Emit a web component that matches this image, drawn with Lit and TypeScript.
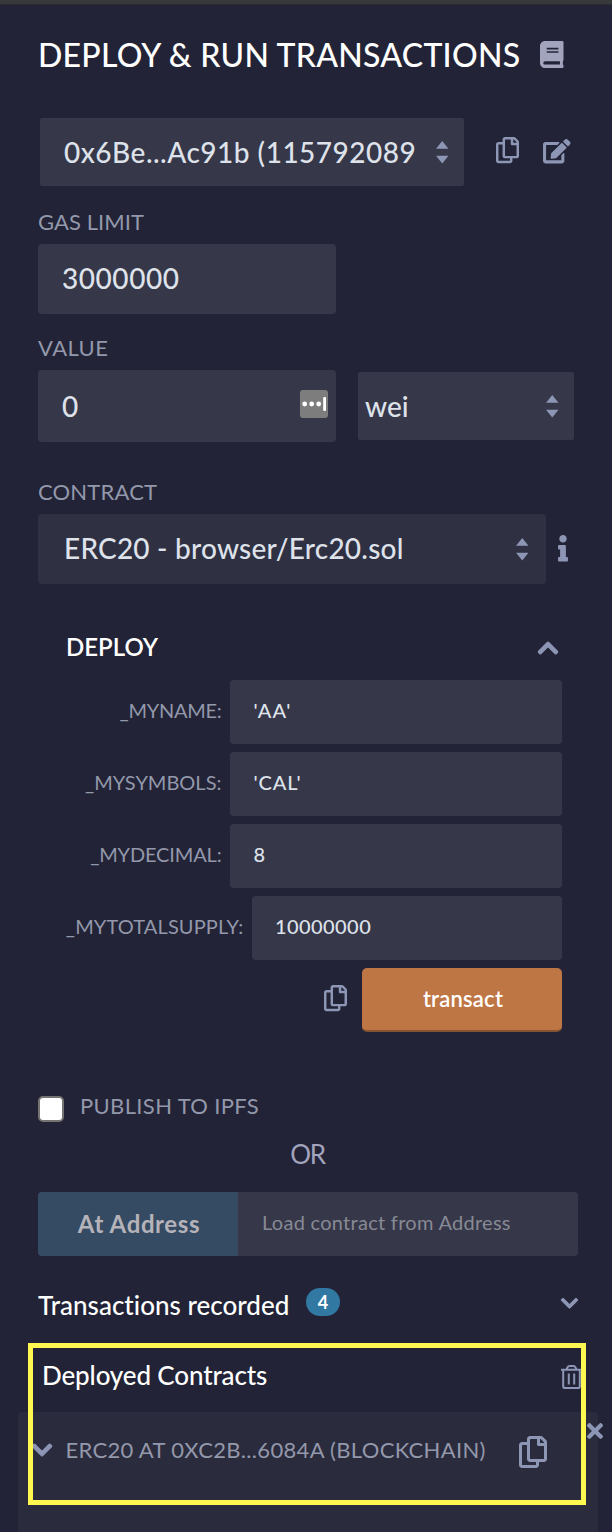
import { LitElement, html, css, svg } from "lit";

const ICONS = {
  copy: {
    box: "0 0 448 512",
    d: "M433.941 65.941l-51.882-51.882A48 48 0 0 0 348.118 0H176c-26.51 0-48 21.49-48 48v48H48c-26.51 0-48 21.49-48 48v320c0 26.51 21.49 48 48 48h224c26.51 0 48-21.49 48-48v-48h80c26.51 0 48-21.49 48-48V99.882a48 48 0 0 0-14.059-33.941zM266 464H54a6 6 0 0 1-6-6V150a6 6 0 0 1 6-6h74v224c0 26.51 21.49 48 48 48h96v42a6 6 0 0 1-6 6zm128-96H182a6 6 0 0 1-6-6V54a6 6 0 0 1 6-6h106v88c0 13.255 10.745 24 24 24h88v202a6 6 0 0 1-6 6zm6-256h-64V48h9.632c1.591 0 3.117.632 4.243 1.757l48.368 48.368a6 6 0 0 1 1.757 4.243V112z",
  },
  book: {
    box: "0 0 448 512",
    d: "M448 360V24c0-13.3-10.7-24-24-24H96C43 0 0 43 0 96v320c0 53 43 96 96 96h328c13.3 0 24-10.7 24-24v-16c0-7.5-3.5-14.3-8.9-18.7-4.2-15.4-4.2-59.3 0-74.7 5.4-4.3 8.9-11.1 8.9-18.6zM128 134c0-3.3 2.7-6 6-6h212c3.3 0 6 2.7 6 6v20c0 3.3-2.7 6-6 6H134c-3.3 0-6-2.7-6-6v-20zm0 64c0-3.3 2.7-6 6-6h212c3.3 0 6 2.7 6 6v20c0 3.3-2.7 6-6 6H134c-3.3 0-6-2.7-6-6v-20zm253.4 250H96c-17.7 0-32-14.3-32-32 0-17.6 14.4-32 32-32h285.4c-1.9 17.1-1.9 46.9 0 64z",
  },
  edit: {
    box: "0 0 576 512",
    d: "M402.6 83.2l90.2 90.2c3.8 3.8 3.8 10 0 13.8L274.4 405.6l-92.8 10.3c-12.4 1.4-22.9-9.1-21.5-21.5l10.3-92.8L388.8 83.2c3.8-3.8 10-3.8 13.8 0zm162-22.9l-48.8-48.8c-15.2-15.2-39.9-15.2-55.2 0l-35.4 35.4c-3.8 3.8-3.8 10 0 13.8l90.2 90.2c3.8 3.8 10 3.8 13.8 0l35.4-35.4c15.2-15.3 15.2-40 0-55.2zM384 346.2V448H64V128h229.8c3.2 0 6.2-1.3 8.5-3.5l40-40c7.6-7.6 2.2-20.5-8.5-20.5H48C21.5 64 0 85.5 0 112v352c0 26.5 21.5 48 48 48h352c26.5 0 48-21.5 48-48V306.2c0-10.7-12.9-16-20.5-8.5l-40 40c-2.2 2.3-3.5 5.3-3.5 8.5z",
  },
  info: {
    box: "0 0 192 512",
    d: "M20 424.229h20V279.771H20c-11.046 0-20-8.954-20-20V212c0-11.046 8.954-20 20-20h112c11.046 0 20 8.954 20 20v212.229h20c11.046 0 20 8.954 20 20V492c0 11.046-8.954 20-20 20H20c-11.046 0-20-8.954-20-20v-47.771c0-11.046 8.954-20 20-20zM96 0C56.235 0 24 32.235 24 72s32.235 72 72 72 72-32.235 72-72S135.764 0 96 0z",
  },
  chevron: {
    box: "0 123 448 266",
    d: "M207.029 381.476L12.686 187.132c-9.373-9.373-9.373-24.569 0-33.941l22.667-22.667c9.357-9.357 24.522-9.375 33.901-.04L224 284.505l154.745-154.021c9.379-9.335 24.544-9.317 33.901.04l22.667 22.667c9.373 9.373 9.373 24.569 0 33.941L240.971 381.476c-9.373 9.372-24.569 9.372-33.942 0z",
  },
  times: {
    box: "0 80 352 352",
    d: "M242.72 256l100.07-100.07c12.28-12.28 12.28-32.19 0-44.48l-22.24-22.24c-12.28-12.28-32.19-12.28-44.48 0L176 189.28 75.93 89.21c-12.28-12.28-32.19-12.28-44.48 0L9.21 111.45c-12.28 12.28-12.28 32.19 0 44.48L109.28 256 9.21 356.07c-12.28 12.28-12.28 32.19 0 44.48l22.24 22.24c12.28 12.28 32.2 12.28 44.48 0L176 322.72l100.07 100.07c12.28 12.28 32.2 12.28 44.48 0l22.24-22.24c12.28-12.28 12.28-32.19 0-44.48L242.72 256z",
  },
  carets: { box: "0 0 13 24", d: "M6.5 0L13 8.2H0zM0 15.4H13L6.5 23.6z" },
};

const icon = (name: keyof typeof ICONS, cls: string) =>
  html`<svg class="icon ${cls}" viewBox=${ICONS[name].box}>${svg`<path d=${ICONS[name].d}></path>`}</svg>`;

const PARAMS = [
  { label: "_MYNAME:", value: "'AA'", cls: "p-name" },
  { label: "_MYSYMBOLS:", value: "'CAL'", cls: "p-symbols" },
  { label: "_MYDECIMAL:", value: "8", cls: "p-decimal" },
  { label: "_MYTOTALSUPPLY:", value: "10000000", cls: "p-supply" },
];

class AppRoot extends LitElement {
  static styles = css`
    :host {
      display: block;
      position: relative;
      box-sizing: border-box;
      height: 1532px;
      overflow: hidden;
      background: #222336;
      color: #fff;
      font-family: Lato, sans-serif;
      white-space: nowrap;
    }
    * { box-sizing: border-box; }
    .icon { display: block; flex: none; fill: #8d96b4; overflow: visible; }
    .topbar { height: 5px; background: #37393b; border-bottom: 1px solid #2a2b2e; }
    .row { display: flex; align-items: center; }
    .grow { flex: 1; }

    .header { height: 113px; padding: 0 48.5px 15px 38px; }
    .title { font-size: 32px; letter-spacing: 0.26px; font-weight: 500; flex: 1; }
    .book { width: 23.5px; height: 27px; fill: #a2a3bd; }

    .field {
      display: flex;
      align-items: center;
      border-radius: 4px;
      background: #363749;
      color: #dee2ea;
      font-size: 28px;
      font-weight: 500;
    }
    .account { height: 68px; padding-left: 40px; }
    .account-select { width: 424px; height: 68px; padding: 0 15.5px 0 24px; border-radius: 2px; letter-spacing: 0.5px; }
    .carets { width: 12.5px; height: 23px; }
    .copy { width: 23px; height: 26.3px; }
    .account .copy { margin: 0 0 3px 32px; }
    .edit { width: 27.5px; height: 24.4px; margin: 0 0 1px 24px; }

    .label { padding-left: 38px; font-size: 22px; line-height: 24px; color: #9398ab; }
    .gas-label { margin-top: 24px; letter-spacing: 0.07px; }
    .gas { width: 298px; height: 70px; margin: 10px 0 0 38px; padding: 0 24px 3px; letter-spacing: 0.55px; }
    .value-label { margin-top: 22px; letter-spacing: 0.42px; }
    .value-row { margin-top: 10px; padding-left: 38px; gap: 22px; }
    .value { width: 298px; height: 72px; padding: 0 8px 0 24px; }
    .autofill { width: 28px; height: 28px; margin-bottom: 4px; }
    .unit { width: 216px; height: 68px; padding: 0 15.5px 0 7px; border-radius: 2px; }
    .contract-label { margin-top: 38px; letter-spacing: 0.18px; }
    .contract-row { margin-top: 10px; padding-left: 38px; }
    .contract { width: 508px; height: 70px; padding: 0 17.5px 0 26px; background: #2f3042; letter-spacing: 0.22px; }
    .field > span { line-height: 34px; }
    .contract > span { padding-bottom: 3px; }
    .info { width: 10px; height: 26.5px; margin: 0 0 2px 12px; }

    .deploy-head { height: 32px; margin-top: 47px; padding: 0 54px 0 66px; }
    .deploy-title { flex: 1; font-size: 24px; font-weight: 600; line-height: 30px; }
    .chev { width: 20px; height: 12px; margin-top: 1px; }
    .chev, .chev-small, .instance-chev { stroke: #8d96b4; stroke-width: 24; stroke-linejoin: round; }
    .up { transform: rotate(180deg); }
    .params { display: flex; flex-direction: column; gap: 8px; margin-top: 17px; padding: 0 50px 0 65px; }
    .param { display: flex; justify-content: flex-end; height: 64px; }
    .param-label { padding-right: 8.5px; font-size: 20px; line-height: 61px; color: #9398ab; }
    .param-input { width: 332px; padding: 0 23.5px 4px; font-size: 20px; }
    .p-name .param-label { letter-spacing: -0.28px; }
    .p-decimal .param-label { letter-spacing: -0.15px; }
    .p-supply .param-label { letter-spacing: 0.13px; }
    .p-supply .param-input { width: 310px; padding-left: 23px; letter-spacing: 0.42px; }
    .p-name .param-input { letter-spacing: 1.2px; }
    .p-symbols .param-input { letter-spacing: 0.9px; }

    .actions { display: flex; justify-content: flex-end; align-items: center; gap: 15.5px; margin-top: 8px; padding-right: 50px; }
    .actions .copy { margin-bottom: 3px; }
    .transact {
      width: 200px;
      height: 64px;
      padding-left: 2px;
      border-radius: 5px;
      border-bottom: 2px solid #84532f;
      background: #bf7645;
      font-size: 22px;
      font-weight: 600;
      line-height: 61px;
      text-align: center;
      letter-spacing: 0.2px;
    }

    .publish { height: 26px; margin-top: 64px; padding-left: 38px; gap: 16px; }
    .check { width: 26px; height: 26px; border: 2px solid #767472; border-radius: 5px; background: #fff; }
    .publish-text { padding: 0 0 7px; font-size: 22px; letter-spacing: 0.36px; color: #9398ab; }
    .or { margin-top: 17px; padding-left: 3px; font-size: 26px; line-height: 30px; text-align: center; letter-spacing: -1.2px; color: #a2a3bd; }

    .at-row { display: flex; width: 540px; height: 64px; margin: 23px 0 0 38px; border-radius: 4px; overflow: hidden; }
    .at-button { width: 200px; padding-left: 2px; background: #354b63; color: #b5b3b9; font-size: 24px; font-weight: 700; line-height: 63px; text-align: center; letter-spacing: 0.62px; }
    .at-input { flex: 1; padding-left: 24px; background: #363749; color: #878a94; font-size: 20px; line-height: 61px; letter-spacing: 0.28px; }

    .recorded { height: 32px; margin-top: 33px; padding: 0 34px 0 38px; font-size: 26px; font-weight: 500; letter-spacing: 0.02px; }
    .badge { width: 34px; height: 28px; margin: 0 0 6px 16.5px; border-radius: 14px; background: #3178a2; font-size: 18px; font-weight: 700; line-height: 29px; text-align: center; }
    .chev-small { width: 17px; height: 10.5px; margin-bottom: 3px; }
    .deployed { height: 32px; margin-top: 38px; padding: 0 30px 0 42px; font-size: 26px; font-weight: 500; letter-spacing: -0.14px; }
    .trash { width: 21px; height: 24px; margin-top: 3px; fill: none; stroke: #8d96b4; stroke-width: 2; }

    .instance { position: relative; display: flex; height: 140px; margin: 21px 14px 0 18px; padding: 24px 51px 0 14px; align-items: flex-start; border-radius: 4px; background: #2a2b3d; }
    .instance-chev { width: 20px; height: 12px; margin-top: 8px; }
    .instance-text { flex: 1; padding-left: 13.5px; font-size: 22px; line-height: 28px; letter-spacing: 0.32px; color: #9398ab; }
    .copy-big { width: 28px; height: 32px; }
    .close { position: absolute; right: -5px; top: 11px; width: 16px; height: 16px; }
    .highlight { position: absolute; left: 28px; top: 1343px; width: 558px; height: 162px; border: 5px solid #fff850; }
  `;

  render() {
    return html`
      <div class="topbar"></div>
      <div class="row header">
        <div class="title">DEPLOY &amp; RUN TRANSACTIONS</div>
        ${icon("book", "book")}
      </div>
      <div class="row account">
        <div class="field account-select">
          <span class="grow">0x6Be...Ac91b (115792089</span>${icon("carets", "carets")}
        </div>
        ${icon("copy", "copy")} ${icon("edit", "edit")}
      </div>

      <div class="label gas-label">GAS LIMIT</div>
      <div class="field gas"><span>3000000</span></div>

      <div class="label value-label">VALUE</div>
      <div class="row value-row">
        <div class="field value">
          <span class="grow">0</span>
          <svg class="icon autofill" viewBox="0 0 28 28">
            <rect width="28" height="28" rx="3" fill="#7d7d7d"></rect>
            <g fill="#fff">
              <circle cx="4.7" cy="14" r="2.4"></circle>
              <circle cx="11.7" cy="14" r="2.4"></circle>
              <circle cx="18.7" cy="14" r="2.4"></circle>
              <rect x="23.2" y="7" width="2.8" height="14" rx="1"></rect>
            </g>
          </svg>
        </div>
        <div class="field unit"><span class="grow">wei</span>${icon("carets", "carets")}</div>
      </div>

      <div class="label contract-label">CONTRACT</div>
      <div class="row contract-row">
        <div class="field contract">
          <span class="grow">ERC20 - browser/Erc20.sol</span>${icon("carets", "carets")}
        </div>
        ${icon("info", "info")}
      </div>

      <div class="row deploy-head">
        <div class="deploy-title">DEPLOY</div>
        ${icon("chevron", "chev up")}
      </div>
      <div class="params">
        ${PARAMS.map(
          (p) => html`<div class="param ${p.cls}">
            <div class="param-label">${p.label}</div>
            <div class="field param-input"><span>${p.value}</span></div>
          </div>`
        )}
      </div>
      <div class="actions">
        ${icon("copy", "copy")}
        <div class="transact">transact</div>
      </div>

      <div class="row publish">
        <div class="check"></div>
        <div class="publish-text">PUBLISH TO IPFS</div>
      </div>
      <div class="or">OR</div>
      <div class="at-row">
        <div class="at-button">At Address</div>
        <div class="at-input">Load contract from Address</div>
      </div>

      <div class="row recorded">
        <div>Transactions recorded</div>
        <div class="badge">4</div>
        <div class="grow"></div>
        ${icon("chevron", "chev-small")}
      </div>
      <div class="row deployed">
        <div class="grow">Deployed Contracts</div>
        <svg class="icon trash" viewBox="0 0 21 24">
          <path d="M0 4.8H21M5.4 4.6L6.6 2.2Q7.2 1 8.4 1H12.6Q13.8 1 14.4 2.2L15.6 4.6M2.2 5V21.2Q2.2 23 4 23H17Q18.8 23 18.8 21.2V5M7.8 8.5V19.5M13.2 8.5V19.5"></path>
        </svg>
      </div>
      <div class="instance">
        ${icon("chevron", "instance-chev")}
        <div class="instance-text">ERC20 AT 0XC2B...6084A (BLOCKCHAIN)</div>
        ${icon("copy", "copy-big")} ${icon("times", "close")}
      </div>
      <div class="highlight"></div>
    `;
  }
}
customElements.define("app-root", AppRoot);
